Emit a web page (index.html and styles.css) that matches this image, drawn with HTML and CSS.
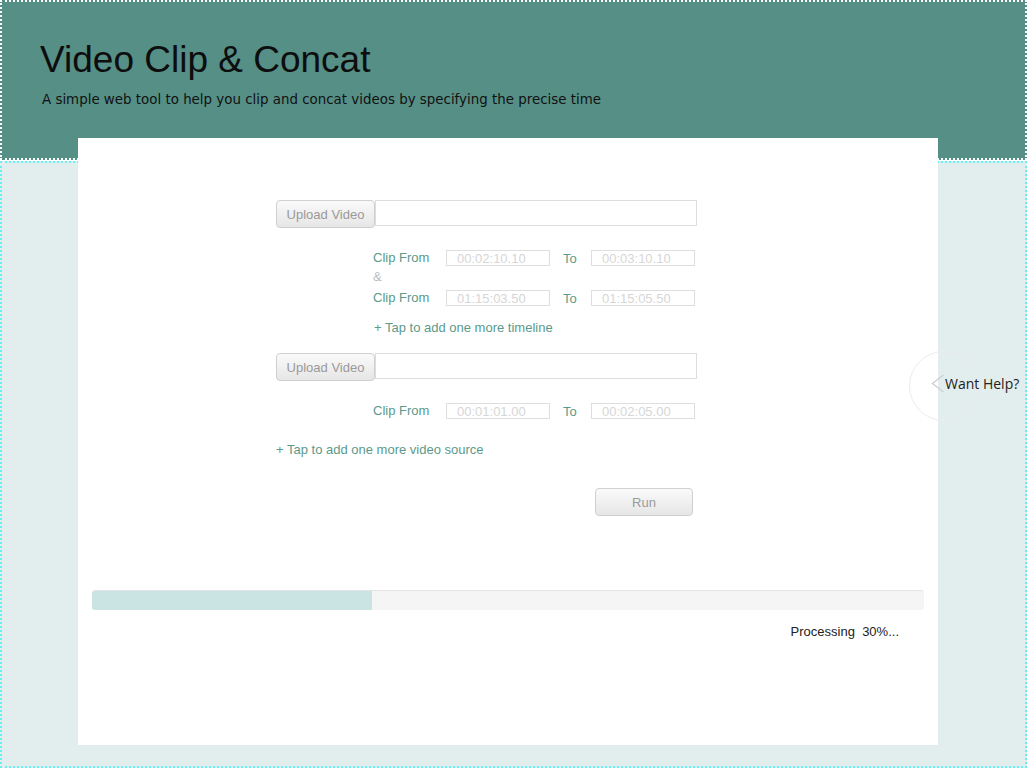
FILE: index.html
```html
<!DOCTYPE html>
<html lang="en">
<head>
<meta charset="utf-8">
<title>Video Clip &amp; Concat</title>
<link rel="stylesheet" href="styles.css">
</head>
<body>
<header class="site-header">
  <h1 class="title">Video Clip &amp; Concat</h1>
  <p class="subtitle">A simple web tool to help you clip and concat videos by specifying the precise time</p>
</header>
<main class="stage">
  <section class="card">
    <div class="form">
      <div class="source">
        <button class="btn upload">Upload Video</button>
        <input class="file-name" type="text">
      </div>
      <div class="timelines">
        <div class="clip-row">
          <span class="label">Clip From</span>
          <input class="time" type="text" placeholder="00:02:10.10">
          <span class="to">To</span>
          <input class="time" type="text" placeholder="00:03:10.10">
        </div>
        <div class="amp">&amp;</div>
        <div class="clip-row">
          <span class="label">Clip From</span>
          <input class="time" type="text" placeholder="01:15:03.50">
          <span class="to">To</span>
          <input class="time" type="text" placeholder="01:15:05.50">
        </div>
        <div class="add-link add-timeline">+ Tap to add one more timeline</div>
      </div>
      <div class="source second">
        <button class="btn upload">Upload Video</button>
        <input class="file-name" type="text">
      </div>
      <div class="timelines single">
        <div class="clip-row">
          <span class="label">Clip From</span>
          <input class="time" type="text" placeholder="00:01:01.00">
          <span class="to">To</span>
          <input class="time" type="text" placeholder="00:02:05.00">
        </div>
      </div>
      <div class="add-link add-source">+ Tap to add one more video source</div>
      <div class="run-wrap">
        <button class="btn run">Run</button>
      </div>
    </div>
    <div class="progress">
      <div class="progress-fill" style="width: 33.7%"></div>
    </div>
    <div class="progress-text">Processing&nbsp; 30%...</div>
  </section>
</main>
<div class="help">
  <span class="help-circle"></span>
  <svg class="help-chevron" width="14" height="20" viewBox="0 0 14 20"><polyline points="12.5,1 1.5,9.5 12.5,18" fill="none" stroke="#cfcfcf" stroke-width="1.4"/></svg>
  <span class="help-text">Want Help?</span>
</div>
</body>
</html>
```

FILE: styles.css
```css
* { box-sizing: border-box; }

html, body {
  margin: 0;
  padding: 0;
  background: #ffffff;
}

body {
  width: 1028px;
  height: 768px;
  overflow: hidden;
  position: relative;
  font-family: "Liberation Sans", Arial, sans-serif;
}

.site-header {
  width: 1027px;
  height: 160px;
  background: #558f86;
  border: 2px dotted #ffffff;
  padding: 38px 0 0 38px;
}

.title {
  margin: 0;
  font-family: "Liberation Sans", Arial, sans-serif;
  font-weight: normal;
  font-size: 37px;
  line-height: 40px;
  color: #0d0d0d;
}

.subtitle {
  margin: 12px 0 0 2px;
  font-family: "DejaVu Sans", Verdana, sans-serif;
  font-size: 13.4px;
  line-height: 16px;
  color: #111111;
}

.stage {
  width: 1027px;
  height: 607px;
  margin-top: 1px;
  background: #e2eeed;
  border: 2px dotted #66f2f2;
  padding: 0 0 0 76px;
}

.card {
  width: 860px;
  height: 607px;
  margin-top: -25px;
  background: #ffffff;
  padding: 62px 14px 0 14px;
}

.form {
  margin-left: 184px;
  width: 421px;
}

.source {
  display: flex;
  align-items: flex-start;
}

.source.second {
  margin-top: 17px;
}

.btn {
  font-family: "Liberation Sans", Arial, sans-serif;
  font-size: 13px;
  color: #9a9a9a;
  background: linear-gradient(#fafafa, #e6e6e6);
  border: 1px solid #cfcfcf;
  border-radius: 4px;
  padding: 0;
  cursor: pointer;
}

.upload {
  width: 99px;
  height: 28px;
  flex: none;
}

.file-name {
  width: 322px;
  height: 26px;
  margin: 0;
  border: 1px solid #dddddd;
  background: #ffffff;
  padding: 0 6px;
  outline: none;
}

.timelines {
  margin-left: 97px;
  margin-top: 22px;
}

.timelines.single {
  margin-top: 22px;
}

.clip-row {
  display: flex;
  align-items: center;
  height: 16px;
}

.label {
  width: 73px;
  font-size: 13px;
  color: #5b9a8b;
  line-height: 16px;
}

.time {
  width: 104px;
  height: 16px;
  margin: 0;
  border: 1px solid #dedede;
  padding: 0 0 0 10px;
  font-family: "Liberation Sans", Arial, sans-serif;
  font-size: 13px;
  color: #cccccc;
  outline: none;
}

.time::placeholder {
  color: #d6d6d6;
  font-weight: 300;
}

.to {
  width: 41px;
  padding-left: 13px;
  font-size: 13px;
  color: #5b9a8b;
  line-height: 16px;
  position: relative;
  top: 1px;
}

.amp {
  height: 24px;
  line-height: 22px;
  font-size: 13px;
  color: #bbbbbb;
}

.add-link {
  font-size: 13px;
  line-height: 16px;
  color: #5b9a8b;
}

.add-timeline {
  margin-top: 14px;
  margin-left: 1px;
}

.add-source {
  margin-top: 23px;
}

.run-wrap {
  margin-top: 30px;
  padding-left: 319px;
}

.run {
  width: 98px;
  height: 28px;
}

.progress {
  margin-top: 74px;
  width: 832px;
  height: 20px;
  background: #f5f5f5;
  border-top: 1px solid #e4e4e4;
  border-radius: 3px;
  overflow: hidden;
  display: flex;
}

.progress-fill {
  height: 100%;
  background: #cae4e4;
}

.progress-text {
  margin-top: 15px;
  width: 832px;
  padding-right: 25px;
  text-align: right;
  font-size: 13px;
  line-height: 14px;
  color: #222222;
}

.help {
  position: absolute;
  left: 909px;
  top: 351px;
  width: 119px;
  height: 70px;
}

.help-circle {
  position: absolute;
  left: 0;
  top: 0;
  width: 70px;
  height: 70px;
  border-radius: 50%;
  border: 1px solid #ececec;
}

.help-chevron {
  position: absolute;
  left: 22px;
  top: 23px;
}

.help-text {
  position: absolute;
  left: 36px;
  top: 24px;
  font-family: "Open Sans", sans-serif;
  font-size: 14px;
  line-height: 18px;
  color: #222222;
  white-space: nowrap;
}
```
